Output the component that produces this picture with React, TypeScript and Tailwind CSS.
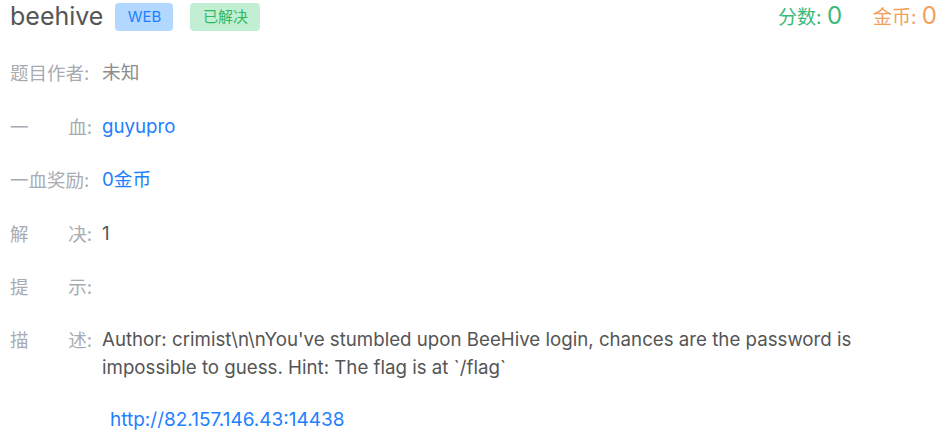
import React from 'react';

const font = { fontFamily: 'Inter, "Noto Sans CJK SC", sans-serif' };

interface RowProps {
  label: string[];
  children?: React.ReactNode;
}

const Row: React.FC<RowProps> = ({ label, children }) => (
  <div className="flex items-start mt-[25.4px] text-[18.7px] leading-[28px]">
    <div className="w-[82px] shrink-0 text-[#a8abb2] text-[18.5px] flex justify-between">
      {label.map((l, i) => <span key={i}>{l}</span>)}
    </div>
    <div className="ml-[10px] flex-1 text-[#555]">{children}</div>
  </div>
);

export default function App() {
  return (
    <div className="w-[943px] h-[433px] bg-white overflow-hidden pl-[10px] pr-[6px]" style={font}>
      <div className="flex items-center justify-between h-[34px]">
        <div className="flex items-center">
          <span className="text-[25px] text-[#555] leading-[30px] -mt-[2px]">beehive</span>
          <span className="ml-[12px] h-[28px] w-[58px] rounded-[4px] bg-[#b3d8ff] text-[#1e80ff] text-[15px] flex items-center justify-center">WEB</span>
          <span className="ml-[17px] h-[28px] w-[70px] rounded-[4px] bg-[#c2efd3] text-[#2fb863] text-[15px] flex items-center justify-center">已解决</span>
        </div>
        <div className="flex items-center text-[19px] -mt-[2px]">
          <span className="text-[#3cb878]">分数: <span className="text-[24px]">0</span></span>
          <span className="ml-[31px] text-[#f2a05b]">金币: <span className="text-[24px]">0</span></span>
        </div>
      </div>
      <Row label={['题目作者:']}><span className="text-[#8d8d8d]">未知</span></Row>
      <Row label={['一', '血:']}><span className="text-[#1e80ff]">guyupro</span></Row>
      <Row label={['一血奖励:']}><span className="text-[#1e80ff]">0金币</span></Row>
      <Row label={['解', '决:']}>1</Row>
      <Row label={['提', '示:']}></Row>
      <Row label={['描', '述:']}>
        Author: crimist\n\nYou've stumbled upon BeeHive login, chances are the password is impossible to guess. Hint: The flag is at `/flag`
        <div className="mt-[24px] ml-[8px] text-[19px]">
          <a className="text-[#1e80ff]">http://82.157.146.43:14438</a>
        </div>
      </Row>
    </div>
  );
}
